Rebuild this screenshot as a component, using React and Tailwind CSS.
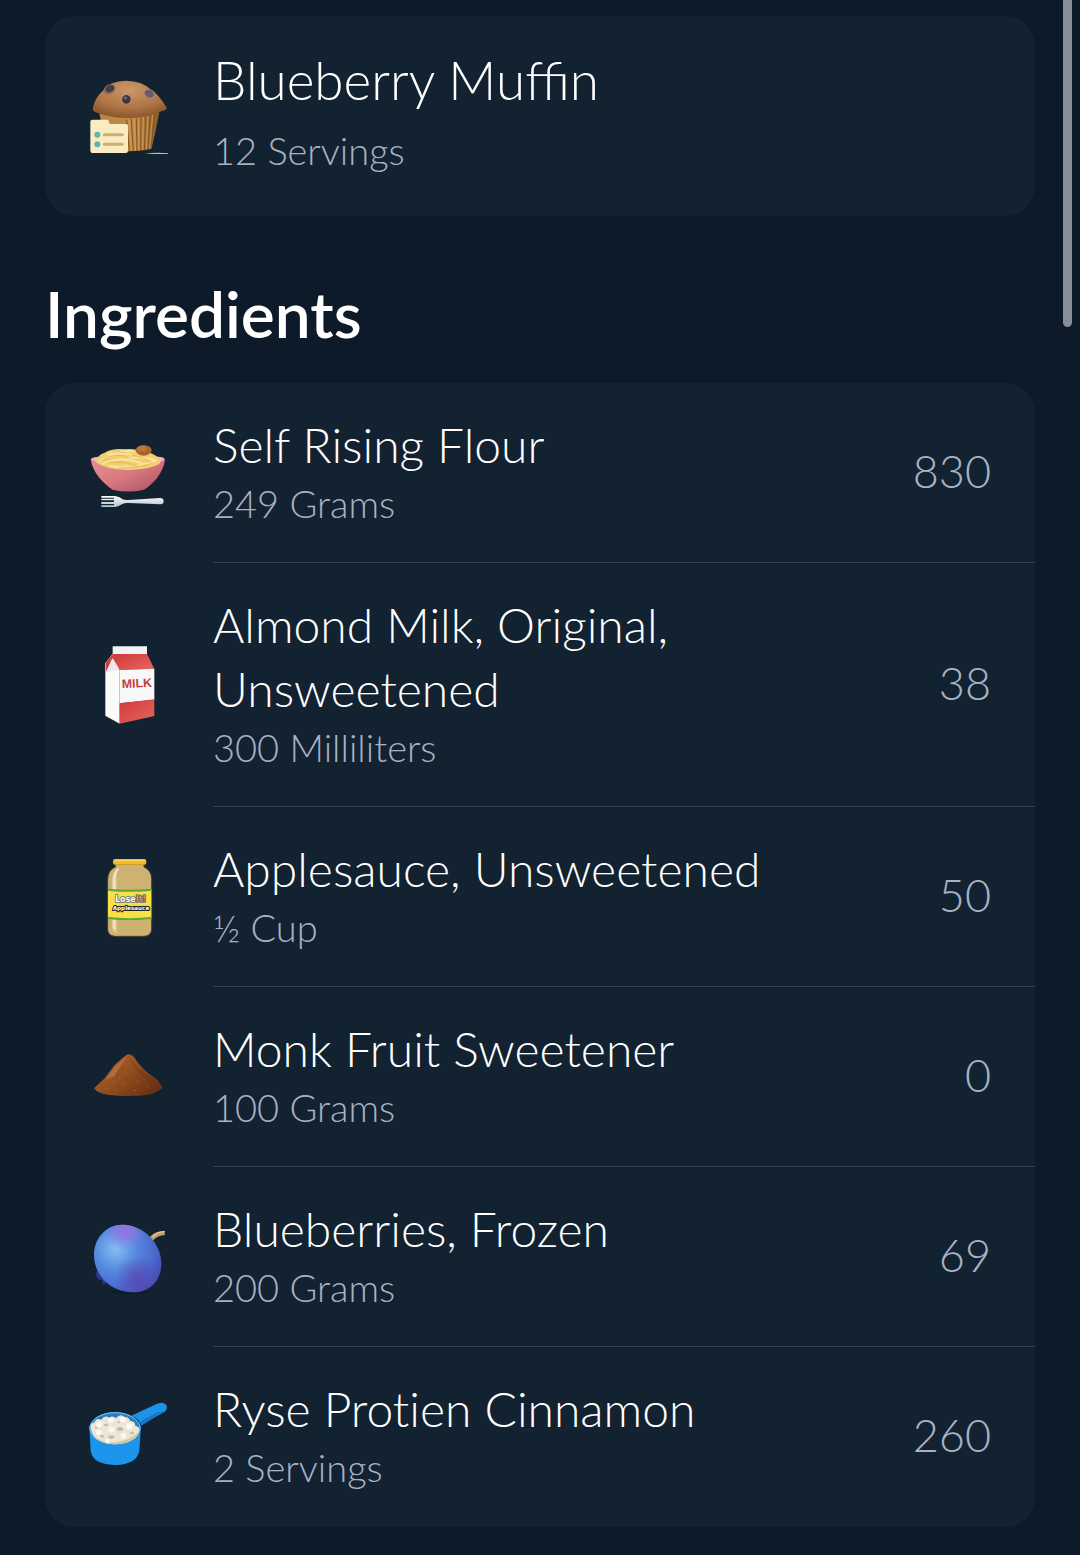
function MuffinIcon() {
  return (
    <svg className="size-20 shrink-0 overflow-visible" viewBox="57 27 240 240" aria-hidden="true">
      <defs>
        <linearGradient id="muffinCup" x1="0" x2="1" y1="0" y2="0">
          <stop offset="0" stopColor="#b98545" />
          <stop offset="0.6" stopColor="#c08a45" />
          <stop offset="1" stopColor="#8d5c28" />
        </linearGradient>
        <radialGradient id="muffinTop" cx="0.5" cy="0.25" r="0.85">
          <stop offset="0" stopColor="#cc9767" />
          <stop offset="0.55" stopColor="#b07645" />
          <stop offset="1" stopColor="#7c4a24" />
        </radialGradient>
      </defs>
      <path d="M88 150 L110 262 Q180 270 244 258 Q256 210 268 148 Z" fill="url(#muffinCup)" />
      <g stroke="#855323" strokeWidth="3" fill="none">
        <path d="M170 170 L178 262 M184 168 L190 264 M199 166 L201 264 M213 164 L212 264 M227 160 L223 262 M241 156 L234 260 M255 152 L243 256" />
      </g>
      <g stroke="#d9a968" strokeWidth="2" fill="none">
        <path d="M177 170 L184 262 M192 168 L196 264 M206 166 L207 264 M220 162 L218 262 M234 158 L229 260 M248 154 L239 256" />
      </g>
      <path d="M68 137 Q74 104 100 82 Q118 54 168 53 Q216 54 240 78 Q262 88 290 134 Q292 140 276 144 Q240 164 178 165 Q120 165 84 150 Q68 146 68 137 Z" fill="url(#muffinTop)" />
      <ellipse cx="118" cy="79" rx="18" ry="14" fill="#8f6a5c" transform="rotate(-28 118 79)" />
      <ellipse cx="120" cy="77" rx="14" ry="10" fill="#463c4c" transform="rotate(-28 120 77)" />
      <circle cx="169" cy="108" r="16" fill="#bf9378" />
      <circle cx="169" cy="109" r="13" fill="#3f3340" />
      <circle cx="166" cy="105" r="5" fill="#6e606b" />
      <ellipse cx="238" cy="93" rx="18" ry="14" fill="#a98778" transform="rotate(25 238 93)" />
      <ellipse cx="238" cy="92" rx="14" ry="11" fill="#665a6c" transform="rotate(25 238 92)" />
      <path d="M61 176 Q61 170 67 170 L112 170 Q116 170 117 176 L119 183 L168 183 Q174 183 174 189 L174 263 Q174 270 167 270 L67 270 Q61 270 61 263 Z" fill="#faecc0" />
      <circle cx="82" cy="215" r="9" fill="#5cb6b4" />
      <circle cx="82" cy="244" r="9" fill="#5cb6b4" />
      <path d="M103 215 H157 M103 244 H157" stroke="#c9b070" strokeWidth="9" strokeLinecap="round" />
      <path d="M224 272 Q260 267 294 271 L294 273 Z" fill="#c3cfd9" />
    </svg>
  );
}

function BowlIcon() {
  return (
    <svg className="size-20 shrink-0" viewBox="57 9 240 240" aria-hidden="true">
      <defs>
        <linearGradient id="bowlBody" x1="0" x2="1" y1="0" y2="1">
          <stop offset="0" stopColor="#e98f95" />
          <stop offset="0.5" stopColor="#d97881" />
          <stop offset="1" stopColor="#a8505b" />
        </linearGradient>
        <linearGradient id="forkMetal" x1="0" x2="0" y1="0" y2="1">
          <stop offset="0" stopColor="#ffffff" />
          <stop offset="1" stopColor="#b4c0cb" />
        </linearGradient>
      </defs>
      <path d="M62 88 Q66 80 90 80 H264 Q284 80 285 89 C280 130 246 165 222 179 Q174 190 128 179 C100 162 68 128 62 88 Z" fill="url(#bowlBody)" />
      <path d="M64 88 Q70 80 90 80 L88 102 Z M283 88 Q278 80 262 80 L262 104 Z" fill="#f3b4b5" />
      <path d="M78 96 Q80 76 104 68 Q128 54 164 58 Q192 54 210 62 Q246 66 262 80 Q272 86 270 100 Q244 118 174 120 Q104 118 78 96 Z" fill="#f2cf72" />
      <g fill="none" stroke="#fce9a8" strokeWidth="4" strokeLinecap="round">
        <path d="M90 94 Q130 62 184 74 M96 102 Q150 76 216 100 M120 108 Q180 118 258 92 M112 74 Q150 60 190 64 M180 84 Q220 78 254 90" />
      </g>
      <g fill="none" stroke="#deb04e" strokeWidth="2" strokeLinecap="round">
        <path d="M104 84 Q140 70 170 80 M116 98 Q160 92 200 108 M190 76 Q226 82 244 100 M146 114 Q200 112 236 104 M128 66 Q150 62 162 68 M96 92 L114 88" />
      </g>
      <ellipse cx="221" cy="61" rx="24" ry="16" fill="#a9652a" />
      <ellipse cx="216" cy="56" rx="14" ry="8" fill="#bb7a3c" />
      <path d="M94 198 H136 Q150 200 158 208 Q164 211 176 210 L270 204 Q281 204 281 214 Q281 224 270 223 L176 219 Q164 218 156 223 Q146 230 136 231 H94 V226 H132 L132 222 H94 V216 H132 V211 H94 V206 H132 V203 H94 Z" fill="url(#forkMetal)" />
    </svg>
  );
}

function MilkIcon() {
  return (
    <svg className="size-20 shrink-0" viewBox="27 30 240 240" aria-hidden="true">
      <defs>
        <linearGradient id="milkRed" x1="0" x2="1" y1="0" y2="1">
          <stop offset="0" stopColor="#d0393b" />
          <stop offset="1" stopColor="#e4675f" />
        </linearGradient>
      </defs>
      <path d="M98 34 H201 V58 H98 Z" fill="#f1f2f3" />
      <path d="M98 56 L76 84 V242 L119 266 V104 Z" fill="#fafafa" />
      <path d="M98 58 L78 82 V112 L98 70 L119 104 Z" fill="#cf3e40" />
      <path d="M96 72 L78 112 L119 105 Z" fill="#efe9e9" />
      <path d="M98 57 H201 L223 101 L119 105 Z" fill="url(#milkRed)" />
      <path d="M119 105 L223 101 V194 L119 205 Z" fill="#f8f8f8" />
      <path d="M119 205 L223 193 V243 L119 266 Z" fill="url(#milkRed)" />
      <text x="126" y="160" fontSize="37" fontWeight="700" fill="#c43d3b" fontFamily="Liberation Sans, sans-serif" transform="rotate(-3 126 160)">
        MILK
      </text>
    </svg>
  );
}

function JarIcon() {
  return (
    <svg className="size-20 shrink-0" viewBox="27 36 240 240" aria-hidden="true">
      <path d="M106 58 H192 V66 Q215 76 215 104 V252 Q214 273 192 274 H104 Q83 272 83 252 V104 Q83 76 106 66 Z" fill="#cdb272" stroke="#4a3f2c" strokeWidth="3" />
      <path d="M108 74 Q96 84 96 106 V244 Q98 262 110 264 V74 Z" fill="#dfcb97" />
      <path d="M114 72 Q103 84 103 108 V250" fill="none" stroke="#f2e6c4" strokeWidth="6" strokeLinecap="round" />
      <rect x="99" y="42" width="100" height="17" rx="6" fill="#f3bb2b" />
      <rect x="104" y="44" width="90" height="5" rx="2" fill="#f9d354" />
      <path d="M84 132 Q148 140 214 132 V222 Q148 230 84 222 Z" fill="#f7e146" />
      <path d="M84 134 Q148 141 214 134 M84 219 Q148 226 214 219" fill="none" stroke="#62a63a" strokeWidth="6" />
      <g fontFamily="DejaVu Sans, sans-serif" fontWeight="700" strokeLinejoin="round" style={{ paintOrder: "stroke" }}>
        <text x="105" y="170" fontSize="24" fill="#ffffff" stroke="#5c6476" strokeWidth="5">
          Lose
          <tspan fill="#f08a3c">It!</tspan>
        </text>
        <text x="98" y="195" fontSize="17" fill="#ffffff" stroke="#1e1e1e" strokeWidth="6">
          Applesauce
        </text>
      </g>
    </svg>
  );
}

function PowderIcon() {
  return (
    <svg className="size-20 shrink-0" viewBox="57 6 240 240" aria-hidden="true">
      <defs>
        <linearGradient id="powderBody" x1="0" x2="1" y1="0" y2="0.7">
          <stop offset="0" stopColor="#b56a35" />
          <stop offset="0.5" stopColor="#96501f" />
          <stop offset="1" stopColor="#6a3214" />
        </linearGradient>
      </defs>
      <path d="M72 160 L104 130 L132 92 Q160 66 172 58 Q184 56 192 66 Q208 92 234 114 L262 134 Q274 150 278 158 Q262 172 236 179 Q180 186 116 180 Q84 176 72 160 Z" fill="url(#powderBody)" />
      <path d="M172 60 Q156 80 134 96 L106 134 L132 124 Q150 96 172 60 Z" fill="#c98457" opacity="0.5" />
      <path d="M176 62 Q196 100 236 124 L266 142 L252 150 Q206 126 176 62 Z" fill="#6e3513" opacity="0.5" />
      <g fill="#7a3f18">
        <circle cx="140" cy="118" r="2" /><circle cx="156" cy="104" r="2" /><circle cx="168" cy="130" r="2" />
        <circle cx="120" cy="146" r="2" /><circle cx="150" cy="156" r="2" /><circle cx="190" cy="150" r="2" />
        <circle cx="214" cy="160" r="2" /><circle cx="178" cy="168" r="2" /><circle cx="98" cy="158" r="2" />
      </g>
      <g fill="#b56c35">
        <circle cx="148" cy="130" r="2" /><circle cx="132" cy="138" r="2" /><circle cx="172" cy="112" r="2" />
        <circle cx="160" cy="146" r="2" /><circle cx="202" cy="140" r="2" /><circle cx="136" cy="166" r="2" />
        <circle cx="196" cy="166" r="2" /><circle cx="110" cy="162" r="2" /><circle cx="232" cy="154" r="2" />
      </g>
    </svg>
  );
}

const berryOutline =
  "M160 44 C112 42 72 82 72 134 C72 196 122 246 186 247 C240 248 274 212 274 160 C274 98 220 46 160 44 Z";

function BlueberryIcon() {
  return (
    <svg className="size-20 shrink-0" viewBox="57 21 240 240" aria-hidden="true">
      <defs>
        <radialGradient id="berryBody" cx="0.32" cy="0.36" r="0.75">
          <stop offset="0" stopColor="#86bdf3" />
          <stop offset="0.4" stopColor="#558ce0" />
          <stop offset="0.8" stopColor="#4a66cb" />
          <stop offset="1" stopColor="#4450b4" />
        </radialGradient>
        <radialGradient id="berryTop" cx="0.46" cy="0.08" r="0.3">
          <stop offset="0" stopColor="#9b72e2" />
          <stop offset="1" stopColor="#9b72e2" stopOpacity="0" />
        </radialGradient>
        <radialGradient id="berryLow" cx="0.65" cy="0.8" r="0.34">
          <stop offset="0" stopColor="#5b44b0" stopOpacity="0.8" />
          <stop offset="1" stopColor="#5b44b0" stopOpacity="0" />
        </radialGradient>
      </defs>
      <ellipse cx="180" cy="246" rx="62" ry="6" fill="#0e1b28" />
      <path d="M84 176 L76 192 L84 208 L96 210 L100 226 L114 214 Z" fill="#26388f" />
      <path d="M240 80 Q256 62 284 62 L284 76 Q264 76 248 92 Z" fill="#c49f6f" />
      <path d="M248 80 Q262 66 284 65" fill="none" stroke="#e0c499" strokeWidth="4" />
      <path d={berryOutline} fill="url(#berryBody)" />
      <path d={berryOutline} fill="url(#berryTop)" />
      <path d={berryOutline} fill="url(#berryLow)" />
    </svg>
  );
}

function ScoopIcon() {
  return (
    <svg className="size-20 shrink-0" viewBox="57 36 240 240" aria-hidden="true">
      <path d="M184 92 L258 58 Q276 48 287 58 Q296 70 284 80 L214 120 Q208 102 184 92 Z" fill="#1d93e8" />
      <path d="M208 112 L262 82 L284 78 L214 122 Z" fill="#1576c4" />
      <path d="M58 122 L62 196 Q66 238 134 240 Q204 238 208 194 L213 122 Z" fill="#1c96ec" />
      <ellipse cx="135" cy="130" rx="77" ry="49" fill="#2a7cc0" />
      <ellipse cx="135" cy="130" rx="75" ry="47" fill="none" stroke="#7cc4f0" strokeWidth="3" />
      <path d="M62 128 Q60 116 74 112 Q78 98 94 104 Q104 88 118 98 Q128 90 138 100 Q150 84 164 96 Q178 96 180 108 Q196 108 196 122 Q214 126 206 142 Q202 162 172 172 Q134 184 98 172 Q64 158 62 128 Z" fill="#ebe6d8" />
      <path d="M66 150 Q96 174 134 172 Q176 168 206 142 Q204 162 172 172 Q134 184 98 172 Q76 164 66 150 Z" fill="#d6c6a4" />
      <g fill="#fbf9f2">
        <circle cx="88" cy="118" r="9" /><circle cx="122" cy="106" r="8" /><circle cx="158" cy="104" r="8" />
        <circle cx="178" cy="124" r="10" /><circle cx="124" cy="134" r="9" /><circle cx="86" cy="142" r="8" />
        <circle cx="160" cy="152" r="8" /><circle cx="112" cy="168" r="7" />
      </g>
      <g fill="#c9bba2">
        <ellipse cx="150" cy="132" rx="10" ry="6" /><ellipse cx="108" cy="120" rx="6" ry="4" />
        <ellipse cx="124" cy="156" rx="9" ry="5" /><ellipse cx="96" cy="154" rx="6" ry="4" />
        <ellipse cx="146" cy="112" rx="4" ry="3" /><ellipse cx="186" cy="144" rx="6" ry="4" />
        <ellipse cx="78" cy="128" rx="4" ry="3" />
      </g>
    </svg>
  );
}

const ingredients = [
  { name: "Self Rising Flour", amount: "249 Grams", calories: 830, Icon: BowlIcon },
  { name: "Almond Milk, Original, Unsweetened", amount: "300 Milliliters", calories: 38, Icon: MilkIcon },
  { name: "Applesauce, Unsweetened", amount: "½ Cup", calories: 50, Icon: JarIcon },
  { name: "Monk Fruit Sweetener", amount: "100 Grams", calories: 0, Icon: PowderIcon },
  { name: "Blueberries, Frozen", amount: "200 Grams", calories: 69, Icon: BlueberryIcon },
  { name: "Ryse Protien Cinnamon", amount: "2 Servings", calories: 260, Icon: ScoopIcon },
];

function IngredientRow({ name, amount, calories, Icon, first }) {
  return (
    <li className="flex items-stretch gap-11 pl-11">
      <div className="flex items-center">
        <Icon />
      </div>
      <div className={`flex min-w-0 flex-1 items-center gap-8 pt-[30px] pb-[34px] pr-11 ${first ? "" : "shadow-[0_-1px_0_#33404e]"}`}>
        <div className="min-w-0 flex-1">
          <h3 className="max-w-[600px] text-[48px] leading-[64px] text-white [font-variant-ligatures:none]">{name}</h3>
          <p className="text-[38px] leading-[52px] text-[#a7b2c4]">{amount}</p>
        </div>
        <span className="text-[45px] leading-[64px] text-[#a7b2c4]">{calories}</span>
      </div>
    </li>
  );
}

export default function App() {
  return (
    <div className="relative min-h-screen bg-[#0d1a29] px-[45px] pt-4 pb-7 font-['Lato',sans-serif] font-light">
      <div className="absolute top-0 right-2 h-[327px] w-[9px] rounded-b-full bg-[#858e99]" />
      <main>
        <section className="flex items-center gap-11 rounded-[30px] bg-[#132231] px-11 pt-[26px] pb-[34px]">
          <MuffinIcon />
          <div>
            <h1 className="text-[53px] leading-[76px] text-white">Blueberry Muffin</h1>
            <p className="text-[38px] leading-[64px] text-[#a7b2c4]">12 Servings</p>
          </div>
        </section>
        <section>
          <h2 className="pt-[58px] pb-[29px] text-[64px] leading-[80px] font-semibold text-white">Ingredients</h2>
          <ul className="rounded-[30px] bg-[#132231]">
            {ingredients.map((item, index) => (
              <IngredientRow key={item.name} {...item} first={index === 0} />
            ))}
          </ul>
        </section>
      </main>
    </div>
  );
}
